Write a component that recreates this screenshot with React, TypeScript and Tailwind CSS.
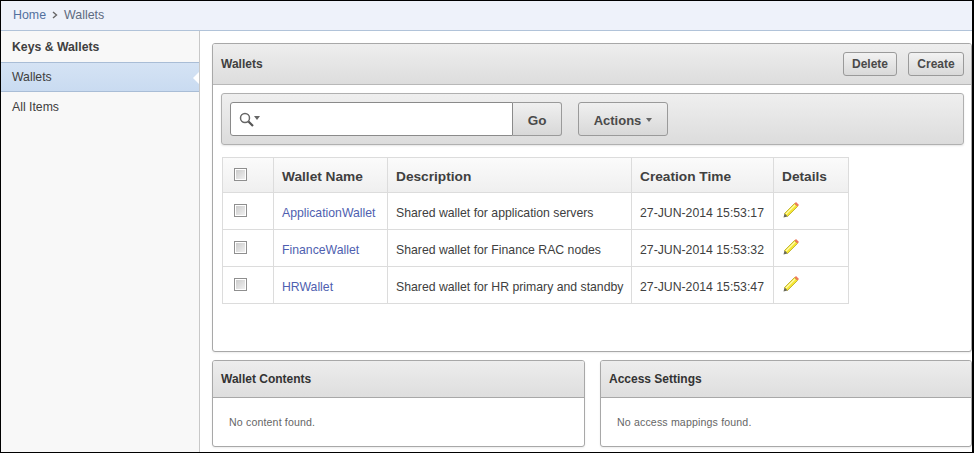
import React from "react";

const Pencil = () => (
  <svg width="18" height="18" viewBox="0 0 18 18" className="block">
    <path d="M2.5 12.5 L12.5 2.5 L15.5 5.5 L5.5 15.5 Z" fill="#f5e632" stroke="#b8a820" strokeWidth="0.8" />
    <path d="M4 13 L13 4" stroke="#fffbb0" strokeWidth="1.2" />
    <path d="M2.5 12.5 L1.5 16.5 L5.5 15.5 Z" fill="#6b6b5a" />
    <path d="M12.5 2.5 L14 1 L17 4 L15.5 5.5 Z" fill="#f0785a" />
  </svg>
);

const Check = () => (
  <span className="block w-[13px] h-[13px] border border-[#8f8f8f] bg-gradient-to-br from-[#c8c8c8] to-[#f4f4f4] shadow-[inset_0_0_0_1px_#fff]" />
);

const rows = [
  ["ApplicationWallet", "Shared wallet for application servers", "27-JUN-2014 15:53:17", "h-[37px]"],
  ["FinanceWallet", "Shared wallet for Finance RAC nodes", "27-JUN-2014 15:53:32", "h-[37px]"],
  ["HRWallet", "Shared wallet for HR primary and standby", "27-JUN-2014 15:53:47", "h-[37px]"],
];

const Small = ({ title, msg, cls }: { title: string; msg: string; cls: string }) => (
  <section className={`${cls} h-[87px] bg-white border border-[#a8a8a8] rounded-[3px] shadow-[0_1px_2px_rgba(0,0,0,0.08)] overflow-hidden`}>
    <div className="h-[37px] px-2 flex items-center border-b border-[#a8a8a8] bg-gradient-to-b from-[#ededed] to-[#dedede] font-bold text-[12px] text-[#333]">
      {title}
    </div>
    <div className="pl-4 pt-[18px] text-[10.6px] tracking-[0.15px] leading-[13px] text-[#666]">{msg}</div>
  </section>
);

export default function App() {
  return (
    <div className="w-[974px] h-[453px] overflow-hidden bg-white border-t border-l border-b border-r-2 border-black flex flex-col text-[12.25px] text-[#404040] font-['Liberation_Sans',Arial,sans-serif]">
      <header className="h-[30px] shrink-0 flex items-center pl-3 pb-[1px] gap-[6px] bg-[#eef2fa] border-b border-[#b1c3d9] text-[12.4px]">
        <span className="text-[#52709e]">Home</span>
        <svg width="6" height="8" viewBox="0 0 6 8"><path d="M1 1 L4.5 4 L1 7" fill="none" stroke="#666" strokeWidth="1.4" /></svg>
        <span className="text-[#5d6b80]">Wallets</span>
      </header>
      <div className="flex flex-1 min-h-0">
        <aside className="w-[199px] shrink-0 bg-[#f8f8f8] border-r border-[#c8c8c8]">
          <div className="h-[31px] pt-[2px] flex items-center pl-[11px] font-bold text-[#404040]">Keys &amp; Wallets</div>
          <div className="relative h-[30px] flex items-center pl-[11px] border-y border-[#a9bdd6] bg-gradient-to-b from-[#d5e3f4] to-[#c9dbf1]">
            Wallets
            <span className="absolute right-0 top-[9px] w-0 h-0 border-y-[6px] border-y-transparent border-r-[6px] border-r-white" />
          </div>
          <div className="h-[30px] flex items-center pl-[11px]">All Items</div>
        </aside>
        <main className="flex-1 min-w-0 pl-3 pt-3">
          <section className="h-[309px] bg-white border border-[#a8a8a8] rounded-[3px] shadow-[0_1px_2px_rgba(0,0,0,0.08)] overflow-hidden">
            <div className="h-[41px] pl-2 pr-[7px] flex items-center justify-between border-b border-[#b8b8b8] bg-gradient-to-b from-[#eeeeee] to-[#dddddd]">
              <span className="font-bold text-[12px] text-[#404040]">Wallets</span>
              <div className="flex gap-[11px]">
                <button className="h-[24px] w-[54px] border border-[#9a9a9a] rounded-[3px] bg-gradient-to-b from-[#f2f2f2] to-[#d9d9d9] text-[12px] font-bold text-[#4a4a4a]">Delete</button>
                <button className="h-[24px] w-[56px] border border-[#9a9a9a] rounded-[3px] bg-gradient-to-b from-[#f2f2f2] to-[#d9d9d9] text-[12px] font-bold text-[#4a4a4a]">Create</button>
              </div>
            </div>
            <div className="ml-2 mr-2 mt-2 w-[743px] h-[52px] border border-[#b0b0b0] rounded-[3px] bg-gradient-to-b from-[#efefef] to-[#dcdcdc] shadow-[0_1px_2px_rgba(0,0,0,0.1)] flex items-center pl-2">
              <div className="flex h-[34px] w-[332px]">
                <div className="w-[283px] bg-white border border-[#8a8a8a] rounded-l-[3px] flex items-center pl-2">
                  <svg width="15" height="15" viewBox="0 0 15 15">
                    <circle cx="6" cy="6" r="4.5" fill="none" stroke="#666" strokeWidth="1.5" />
                    <path d="M9.5 9.5 L14 14" stroke="#555" strokeWidth="2.2" />
                  </svg>
                  <span className="w-0 h-0 mb-[3px] border-x-[3px] border-x-transparent border-t-[4px] border-t-[#666]" />
                </div>
                <button className="w-[49px] pt-[4px] border border-l-0 border-[#9a9a9a] rounded-r-[3px] bg-gradient-to-b from-[#f0f0f0] to-[#d8d8d8] font-bold text-[13.5px] text-[#4a4a4a]">Go</button>
              </div>
              <button className="ml-4 h-[34px] pt-[3px] w-[90px] border border-[#9a9a9a] rounded-[3px] bg-gradient-to-b from-[#f0f0f0] to-[#d8d8d8] font-bold text-[13px] text-[#4a4a4a] flex items-center justify-center gap-[5px]">
                Actions
                <span className="w-0 h-0 mb-[2px] border-x-[3.5px] border-x-transparent border-t-[4px] border-t-[#666]" />
              </button>
            </div>
            <table className="ml-[9px] mt-[12px] border-collapse table-fixed w-[627px]">
              <colgroup>
                <col className="w-[51px]" /><col className="w-[114px]" /><col className="w-[244px]" /><col className="w-[142px]" /><col className="w-[75px]" />
              </colgroup>
              <thead>
                <tr className="h-[35px] bg-gradient-to-b from-[#fbfbfb] to-[#efefef] text-[13.7px] font-bold text-[#404040] text-left">
                  <th className="border border-[#dcdcdc] pl-[11px] align-middle"><div className="mb-[1px]"><Check /></div></th>
                  <th className="border border-[#dcdcdc] pl-2 pt-[4px] font-bold">Wallet Name</th>
                  <th className="border border-[#dcdcdc] pl-2 pt-[4px] font-bold">Description</th>
                  <th className="border border-[#dcdcdc] pl-2 pt-[4px] font-bold">Creation Time</th>
                  <th className="border border-[#dcdcdc] pl-2 pt-[4px] font-bold">Details</th>
                </tr>
              </thead>
              <tbody>
                {rows.map((r) => (
                  <tr key={r[0]} className={r[3]}>
                    <td className="border border-[#dcdcdc] pl-[11px]"><div className="mb-[2px]"><Check /></div></td>
                    <td className="border border-[#dcdcdc] pl-2 pt-[4px] text-[#4f5fb0]">{r[0]}</td>
                    <td className="border border-[#dcdcdc] pl-2 pt-[4px] whitespace-nowrap">{r[1]}</td>
                    <td className="border border-[#dcdcdc] pl-2 pt-[4px] whitespace-nowrap">{r[2]}</td>
                    <td className="border border-[#dcdcdc] pl-2"><div className="mb-[3px]"><Pencil /></div></td>
                  </tr>
                ))}
              </tbody>
            </table>
          </section>
          <div className="flex gap-[15px] mt-[8px]">
            <Small cls="w-[373px]" title="Wallet Contents" msg="No content found." />
            <Small cls="w-[372px]" title="Access Settings" msg="No access mappings found." />
          </div>
        </main>
      </div>
    </div>
  );
}
